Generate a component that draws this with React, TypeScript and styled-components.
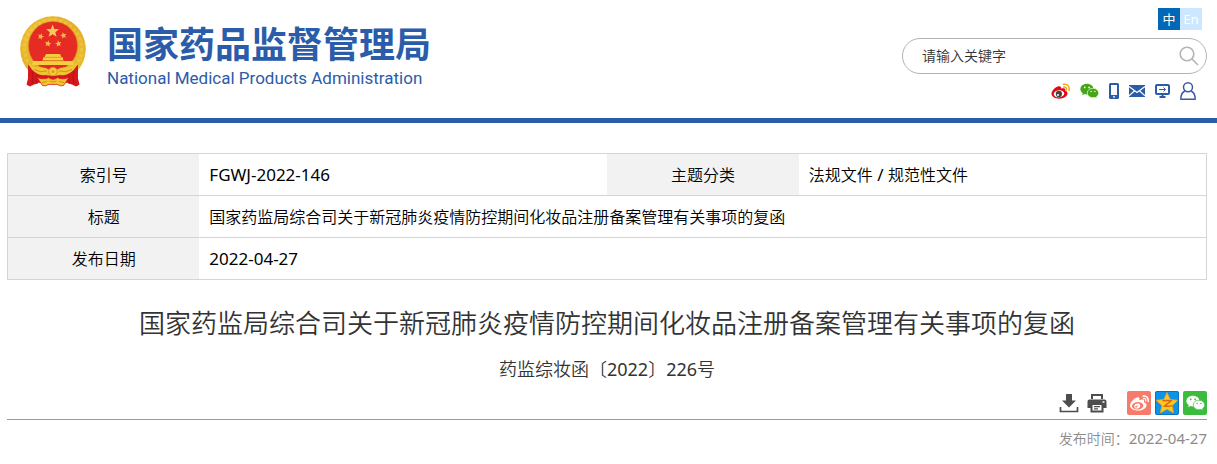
import React from "react";
import styled, { createGlobalStyle } from "styled-components";
import { FaWeibo } from "react-icons/fa";

const BLUE = "#2a5caa";

const GlobalStyle = createGlobalStyle`
  * { box-sizing: border-box; }
  body {
    margin: 0;
    background: #fff;
    color: #000;
    font-family: "Noto Sans", "Noto Sans CJK SC", sans-serif;
    font-size: 16px;
    font-weight: 350;
  }
  svg { display: block; }
`;

const Header = styled.header`
  display: flex;
  justify-content: space-between;
  padding: 8px 10px 18px 20px;
  border-bottom: 5px solid ${BLUE};
`;

const Brand = styled.a`
  display: flex;
  gap: 20px;
  padding-top: 8px;
  color: ${BLUE};
  text-decoration: none;
`;

const BrandText = styled.div`
  display: flex;
  flex-direction: column;
  white-space: nowrap;
`;

const BrandName = styled.strong`
  font-family: "Noto Sans CJK SC", sans-serif;
  font-size: 36px;
  font-weight: 700;
  line-height: 52px;
`;

const BrandEnglish = styled.span`
  font-family: Roboto, "Liberation Sans", sans-serif;
  font-size: 17px;
  font-weight: 400;
  line-height: 20px;
`;

const Tools = styled.div`
  display: flex;
  flex-direction: column;
  align-items: flex-end;
  gap: 8px;
`;

const Languages = styled.nav`
  display: flex;
  padding-right: 5px;
`;

const Language = styled.a<{ $active?: boolean }>`
  width: 22px;
  line-height: 22px;
  font-size: 13px;
  font-weight: 400;
  text-align: center;
  text-decoration: none;
  color: #fff;
  background: ${(p) => (p.$active ? "#0068b7" : "#cce7ff")};
`;

const SearchForm = styled.form`
  display: flex;
  align-items: center;
  width: 305px;
  height: 36px;
  padding: 0 7px 0 19px;
  border: 1px solid #b3b3b3;
  border-radius: 18px;
`;

const SearchInput = styled.input`
  flex: 1;
  min-width: 0;
  padding: 0 0 2px;
  border: 0;
  outline: 0;
  background: none;
  font: inherit;
  font-size: 14px;
  color: #333;
  &::placeholder { color: #333; opacity: 1; }
`;

const IconButton = styled.button`
  padding: 0;
  border: 0;
  background: none;
  cursor: pointer;
`;

const QuickLinks = styled.nav`
  display: flex;
  align-items: center;
  gap: 10px;
  height: 18px;
  padding-right: 11px;
`;

const IconLink = styled.a`
  display: block;
`;

const Main = styled.main`
  padding: 30px 10px 14px 7px;
`;

const InfoTable = styled.table`
  width: 100%;
  table-layout: fixed;
  border-collapse: collapse;
  border: 1px solid #d5d5d5;
`;

const InfoRow = styled.tr`
  border-bottom: 1px solid #d5d5d5;
`;

const InfoLabel = styled.th`
  width: 16%;
  height: 42px;
  padding: 0;
  background: #f2f2f2;
  font-weight: inherit;
  line-height: 24px;
`;

const InfoValue = styled.td`
  padding: 0 10px;
  line-height: 24px;
`;

const Code = styled.span`
  font-size: 17px;
  font-weight: 400;
`;

const Title = styled.h1`
  margin: 23px 0 0;
  font-size: 26px;
  font-weight: inherit;
  line-height: 40px;
  text-align: center;
  color: #333;
`;

const DocumentNumber = styled.p`
  margin: 12px 0 0;
  font-size: 18px;
  line-height: 28px;
  text-align: center;
  color: #333;
`;

const Digits = styled.span`
  font-weight: 400;
`;

const Actions = styled.div`
  display: flex;
  justify-content: flex-end;
  align-items: center;
  gap: 4px;
  margin-top: 8px;
  padding-bottom: 4px;
  border-bottom: 1px solid #999;
`;

const PageActions = styled.div`
  display: flex;
  gap: 8px;
  margin-right: 16px;
`;

const ShareLink = styled.a<{ $color: string }>`
  display: grid;
  place-items: center;
  width: 24px;
  height: 24px;
  border-radius: 2px;
  color: #fff;
  background: ${(p) => p.$color};
`;

const Published = styled.p`
  margin: 7px 0 0;
  font-size: 14px;
  line-height: 22px;
  text-align: right;
  color: #8c8c8c;
`;

const PublishedDate = styled.time`
  font-size: 15px;
  font-weight: 400;
`;

function starPoints(cx: number, cy: number, r: number, turn = 0, inner = 0.4) {
  return Array.from({ length: 10 }, (_, i) => {
    const a = ((turn - 90 + i * 36) * Math.PI) / 180;
    const d = i % 2 ? r * inner : r;
    return `${(cx + d * Math.cos(a)).toFixed(2)},${(cy + d * Math.sin(a)).toFixed(2)}`;
  }).join(" ");
}

const Emblem = () => (
  <svg width="67" height="72" viewBox="0 0 67 72" aria-hidden="true">
    <defs>
      <linearGradient id="gold" x1="0" y1="0" x2="1" y2="1">
        <stop offset="0" stopColor="#f0c53a" />
        <stop offset="0.5" stopColor="#e4b029" />
        <stop offset="1" stopColor="#efc235" />
      </linearGradient>
    </defs>
    <circle cx="33" cy="33" r="32.8" fill="url(#gold)" />
    <circle cx="33" cy="32.500" r="28.500" fill="none" stroke="#f7da58" strokeWidth="3" strokeDasharray="3 2.400" opacity="0.35" />
    <circle cx="33" cy="33" r="31.800" fill="none" stroke="#d9a325" strokeWidth="0.8" strokeDasharray="4 3" opacity="0.6" />
    <circle cx="33" cy="30" r="24.500" fill="#e62a24" stroke="#cf8a18" strokeWidth="0.6" />
    <polygon points={starPoints(32.6, 15.3, 6.8, 0, 0.42)} fill="#f6c95a" />
    <polygon points={starPoints(20.7, 20.5, 3.4, 20, 0.45)} fill="#f5b94b" />
    <polygon points={starPoints(43.5, 19.5, 3.4, -15, 0.45)} fill="#f5b94b" />
    <polygon points={starPoints(28, 27.7, 3.4, 10, 0.45)} fill="#f5b94b" />
    <polygon points={starPoints(38.4, 27.7, 3.4, -10, 0.45)} fill="#f5b94b" />
    <path d="M26 38h14l1.500 3h-17zM23.500 41h19l1 3.600h-21zM13 45h40l1 4H12z" fill="#f6cf3f" />
    <path d="M24 41.400h18M22.500 44.800h21" stroke="#d98a20" strokeWidth="0.7" />
    <path d="M8 48.500Q18 60 33 60T58 48.500L57 66 33 68 9 66z" fill="#d7191d" />
    <path d="M8 50.500l7 6 4 4-1 7-4 1-4 2-2-1-1.500-1 1.500-6zM58 50.500l-7 6-4 4 1 7 4 1 4 2 2-1 1.500-1-1.500-6z" fill="#d7191d" />
    <path d="M12 55q2 6 0 13M17 59q1 4-1 8M54 55q-2 6 0 13M49 59q-1 4 1 8" fill="none" stroke="#a80f16" strokeWidth="0.8" />
    <path d="M9 48.500q7 3.500 13 3 4-.2 6.500 2 4.500-4 9 0 2.500-2.200 6.500-2 6 .5 13-3-2 6-9 9.500-6 2.500-10.500 0-4.500 4-9 0-4.500 2.500-10.500 0-7-3.500-9-9.500z" fill="#f0c434" />
    <path d="M14 53.500q6 3.500 13 1.500M52 53.500q-6 3.500-13 1.500" fill="none" stroke="#c98416" strokeWidth="0.8" />
    <circle cx="33" cy="55.500" r="4.200" fill="#f3cd3b" stroke="#c98416" strokeWidth="0.7" />
    <circle cx="33" cy="55.500" r="1.500" fill="#d79b20" />
    <path d="M17 61.500q7 2.500 11.500 0 4.500 3.500 9 0 4.500 2.500 11.500 0l-5.500 8-3 .3q-3.500-2.300-7.500-1.300-4-1-7.500 1.300l-3-.3z" fill="#f2c530" stroke="#d7191d" strokeWidth=".8" />
    <path d="M22 66.500l5-1M44 66.500l-5-1M29.500 65q3.500 2 7 0" fill="none" stroke="#c98416" strokeWidth="0.8" />
  </svg>
);

const SearchIcon = () => (
  <svg width="20" height="20" viewBox="0 0 20 20" fill="none" stroke="#b3b3b3" strokeWidth="1.6">
    <circle cx="8" cy="8" r="6.800" />
    <path d="M13 13l6 6" />
  </svg>
);

const WeiboColorIcon = () => (
  <svg width="19" height="16" viewBox="0 0 19 16">
    <path d="M8 3.300C5.500 3 .5 7.300.5 10.800c0 3 3.600 4.900 7.600 4.900 5 0 8.400-2.700 8.400-5.200 0-1.700-1.300-2.500-2.300-2.800.6-1.900-.3-3.300-4-2.100.3-1.200-.4-2.200-2.200-2.300z" fill="#e00a14" />
    <ellipse cx="8" cy="10.800" rx="5.300" ry="3.500" transform="rotate(-6 8 10.800)" fill="#fff" />
    <circle cx="7.900" cy="10.900" r="3.100" fill="#444" />
    <circle cx="7" cy="11.900" r="1" fill="#fff" />
    <path d="M12.500 1.300c4-.8 6.300 2.100 5.500 6M12.700 4.100c2-.4 3.100.8 2.700 2.700" fill="none" stroke="#f2a516" strokeWidth="1.500" strokeLinecap="round" />
  </svg>
);

const WechatIcon = ({ color, eyes }: { color: string; eyes: string }) => (
  <svg width="19" height="16" viewBox="0 0 20 16" preserveAspectRatio="xMidYMid meet">
    <path d="M7.300.4C3.400.4.400 2.900.400 6c0 1.800 1 3.300 2.500 4.300L2.300 12.500l2.500-1.300c.8.2 1.600.4 2.500.4 3.900 0 6.900-2.500 6.900-5.600S11.200.4 7.300.4z" fill={color} />
    <path d="M13.700 5.100c-3.500 0-6.100 2.200-6.100 5s2.600 5 6.100 5c.8 0 1.500-.1 2.200-.3l2 1.100-.5-1.900c1.400-.9 2.300-2.300 2.300-3.900 0-2.800-2.600-5-6-5z" fill={color} stroke={eyes} strokeWidth="0.700" />
    <g fill={eyes}>
      <circle cx="5" cy="4.200" r=".9" />
      <circle cx="9.600" cy="4.200" r=".9" />
      <circle cx="11.700" cy="8.600" r=".75" />
      <circle cx="15.700" cy="8.600" r=".75" />
    </g>
  </svg>
);

const PhoneIcon = () => (
  <svg width="10" height="16" viewBox="0 0 10 16">
    <rect width="10" height="16" rx="1.500" fill={BLUE} />
    <path d="M2 2h6v10H2zM4 13.300h2v1.200H4z" fill="#fff" />
  </svg>
);

const MailIcon = () => (
  <svg width="16" height="12" viewBox="0 0 16 12">
    <rect width="16" height="12" fill={BLUE} />
    <path d="M0 1.500l8 6 8-6M0 10.800l5.600-5M16 10.800l-5.600-5" fill="none" stroke="#fff" strokeWidth="1.200" />
  </svg>
);

const MonitorIcon = () => (
  <svg width="15" height="14" viewBox="0 0 15 14" fill="none" stroke={BLUE}>
    <rect x="1" y="1" width="13" height="9" rx="1" strokeWidth="2" />
    <path d="M4 5.500h6.500M8.500 3.500l2 2-2 2" strokeWidth="1" />
    <path d="M7.500 10v2.500M4.500 13h6" strokeWidth="2" />
  </svg>
);

const UserIcon = () => (
  <svg width="16" height="18" viewBox="0 0 16 18" fill="none" stroke="#3c57a8" strokeWidth="1.500">
    <circle cx="8" cy="5.300" r="4.500" />
    <path d="M4.800 9C2.300 10.300.8 12.800.8 17.200h14.400c0-4.400-1.500-6.900-4-8.200" strokeLinejoin="round" />
  </svg>
);

const DownloadIcon = () => (
  <svg width="20" height="20" viewBox="0 0 20 20" fill="#4d4d4d">
    <path d="M7 1h6v6.500h4L10 14.500 3 7.500h4z" />
    <path d="M1.500 14v4.500h17V14" fill="none" stroke="#4d4d4d" strokeWidth="1.700" />
  </svg>
);

const PrintIcon = () => (
  <svg width="20" height="20" viewBox="0 0 20 20" fill="#4d4d4d">
    <path d="M4 1h12v5h-2V3H6v3H4z" />
    <path fillRule="evenodd" d="M2.500 6.500h15Q19.500 6.500 19.500 8.500V15H16.500v4.500H3.500V15H.5V8.500Q.5 6.500 2.500 6.500zM5.500 12v5.500h9V12zM15.500 8.200v1.600h2V8.200z" />
    <path d="M7 13h6v1.200H7zM7 15.300h4v1.200H7z" />
  </svg>
);

const QzoneIcon = () => (
  <svg width="24" height="24" viewBox="0 0 24 24">
    <rect x=".5" y=".5" width="23" height="23" rx="2" fill="#0c93e8" stroke="#0872bd" />
    <polygon points={starPoints(12, 12.8, 11.3, 0, 0.48)} fill="#fdc821" stroke="#f39a19" strokeWidth=".8" strokeLinejoin="round" />
    <path d="M7.500 9.800q4.500-.8 8.500 0l-6.500 5.200q4 .6 7.500-.4" fill="none" stroke="#d9660c" strokeWidth="1.500" />
  </svg>
);

export default function App() {
  return (
    <>
      <GlobalStyle />
      <Header>
        <Brand href="#">
          <Emblem />
          <BrandText>
            <BrandName>国家药品监督管理局</BrandName>
            <BrandEnglish>National Medical Products Administration</BrandEnglish>
          </BrandText>
        </Brand>
        <Tools>
          <Languages>
            <Language href="#" $active>中</Language>
            <Language href="#">En</Language>
          </Languages>
          <SearchForm onSubmit={(e) => e.preventDefault()}>
            <SearchInput type="text" aria-label="请输入关键字" placeholder="请输入关键字" />
            <IconButton type="submit" aria-label="搜索"><SearchIcon /></IconButton>
          </SearchForm>
          <QuickLinks>
            <IconLink href="#" aria-label="微博"><WeiboColorIcon /></IconLink>
            <IconLink href="#" aria-label="微信"><WechatIcon color="#43a714" eyes="#fff" /></IconLink>
            <IconLink href="#" aria-label="手机版"><PhoneIcon /></IconLink>
            <IconLink href="#" aria-label="邮箱"><MailIcon /></IconLink>
            <IconLink href="#" aria-label="电脑版"><MonitorIcon /></IconLink>
            <IconLink href="#" aria-label="用户"><UserIcon /></IconLink>
          </QuickLinks>
        </Tools>
      </Header>
      <Main>
        <InfoTable>
          <tbody>
            <InfoRow>
              <InfoLabel scope="row">索引号</InfoLabel>
              <InfoValue><Code>FGWJ-2022-146</Code></InfoValue>
              <InfoLabel scope="row">主题分类</InfoLabel>
              <InfoValue>法规文件<Code> / </Code>规范性文件</InfoValue>
            </InfoRow>
            <InfoRow>
              <InfoLabel scope="row">标题</InfoLabel>
              <InfoValue colSpan={3}>国家药监局综合司关于新冠肺炎疫情防控期间化妆品注册备案管理有关事项的复函</InfoValue>
            </InfoRow>
            <InfoRow>
              <InfoLabel scope="row">发布日期</InfoLabel>
              <InfoValue colSpan={3}><Code>2022-04-27</Code></InfoValue>
            </InfoRow>
          </tbody>
        </InfoTable>
        <Title>国家药监局综合司关于新冠肺炎疫情防控期间化妆品注册备案管理有关事项的复函</Title>
        <DocumentNumber>药监综妆函〔<Digits>2022</Digits>〕<Digits>226</Digits>号</DocumentNumber>
        <Actions>
          <PageActions>
            <IconButton type="button" aria-label="下载"><DownloadIcon /></IconButton>
            <IconButton type="button" aria-label="打印"><PrintIcon /></IconButton>
          </PageActions>
          <ShareLink href="#" aria-label="分享到微博" $color="#f77b6b"><FaWeibo size={19} /></ShareLink>
          <ShareLink href="#" aria-label="分享到QQ空间" $color="#0c93e8"><QzoneIcon /></ShareLink>
          <ShareLink href="#" aria-label="分享到微信" $color="#3bbc3c"><WechatIcon color="#fff" eyes="#3bbc3c" /></ShareLink>
        </Actions>
        <Published>发布时间：<PublishedDate dateTime="2022-04-27">2022-04-27</PublishedDate></Published>
      </Main>
    </>
  );
}
